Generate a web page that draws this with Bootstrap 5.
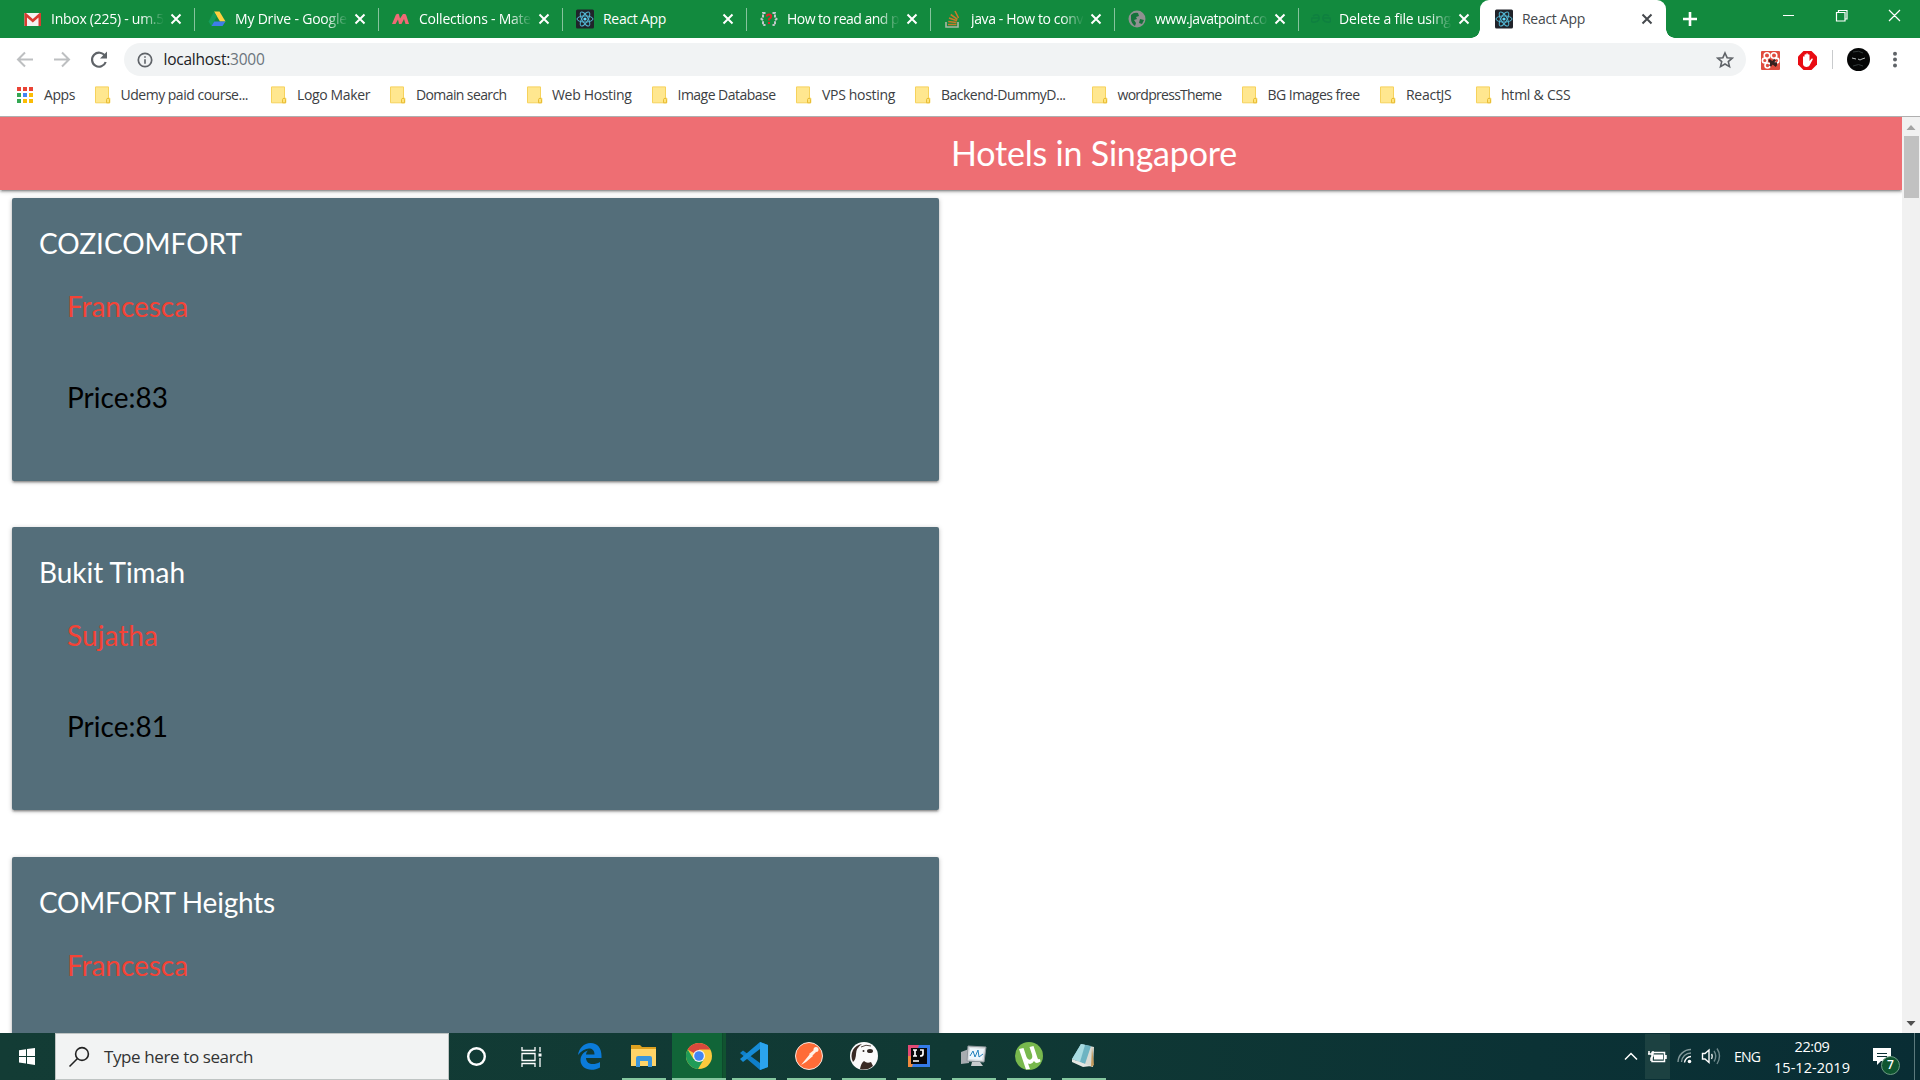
<!DOCTYPE html>
<html lang="en">
<head>
<meta charset="utf-8">
<title>React App</title>
<link href="https://cdn.jsdelivr.net/npm/bootstrap@5.3.0/dist/css/bootstrap.min.css" rel="stylesheet">
<style>
html,body{height:100%;overflow:hidden}
body{font-family:"Open Sans","Noto Sans",sans-serif;font-size:14px;line-height:1;background:#fff;color:#3c4043}
svg{display:block;flex:none}
.fit{white-space:nowrap;display:inline-block}
.screen{width:1920px;height:1080px}
.tabstrip{height:38px;background:#128a3e;padding-left:11px}
.tab{width:184px;height:38px;padding-left:12px;color:#fff}
.tab .fav{width:20px;height:20px;margin-right:8px}
.tab .ttl{width:113px;height:20px;line-height:19px;overflow:hidden;white-space:nowrap}
.tab.cut .ttl{-webkit-mask-image:linear-gradient(90deg,#000 80%,transparent 100%);mask-image:linear-gradient(90deg,#000 80%,transparent 100%)}
.tab .x{margin-left:6px}
.tab .sep{width:1px;height:23px;background:#86c39d;margin-left:auto}
.tab.on{color:#45494d;background:#fff;border-radius:9px 9px 0 0;width:186px;margin-left:-3px;padding-left:14px;position:relative}
.tab.on:before,.tab.on:after{content:"";position:absolute;bottom:0;width:9px;height:9px}
.tab.on:before{left:-9px;background:radial-gradient(circle at 0 0,transparent 8.5px,#fff 9px)}
.tab.on:after{right:-9px;background:radial-gradient(circle at 100% 0,transparent 8.5px,#fff 9px)}
.newtab{margin:12px 0 0 17px}
.winctl{margin-right:19px}
.toolbar{height:42px;padding:1px 0 0 15px}
.omni{width:1622px;height:33px;border-radius:17px;background:#f1f3f4;padding:0 12px 0 13px;margin-left:17px;font-size:15.5px;color:#202124}
.omni .fit{margin-left:10.5px}
.bookmarks{height:36px;padding-left:17px}
.bm{flex:none}
.viewport{height:917px;border-top:1px solid #afafaf}
.sheet{width:1902px;overflow:hidden}
.topnav{height:73px;background:#ee6e73;color:#fff;box-shadow:0 2px 2px 0 rgba(0,0,0,.2),0 3px 1px -2px rgba(0,0,0,.14),0 1px 5px 0 rgba(0,0,0,.22);font-family:Lato,sans-serif;font-size:34px;padding-left:951px;line-height:71px}
.hotels{padding:8px 0 0 12px}
.hotel{width:927px;height:283px;margin-bottom:46.3px;flex:none;background:#546e7a;border:0;border-radius:2px;box-shadow:0 2px 2px 0 rgba(0,0,0,.2),0 3px 1px -2px rgba(0,0,0,.14),0 1px 5px 0 rgba(0,0,0,.22);font-family:Lato,sans-serif;font-size:28px;line-height:36px;padding:27px}
.hotel .name{color:#fff}
.hotel .host{color:#f44336;padding-left:28px;margin-top:27px}
.hotel .price{color:#000;padding-left:28px;margin-top:55px}
.sbar{width:18px;background:#f1f1f1}
.thumb{width:15px;height:62px;background:#c1c1c1}
.taskbar{height:47px;background:linear-gradient(90deg,#133c35,#103934 50%,#0b3235 80%,#092d34);color:#fff}
.start{width:55px;padding-left:19px}
.searchbox{width:394px;background:#f2f3f3;border:1px solid #bfc4c3;color:#333;font-size:17px;padding-left:12px}
.searchbox .fit{margin-left:14px}
.slot{width:55px;height:47px}
.edge{margin-left:3px}
.app{width:55px;height:47px;padding-top:9px}
.app svg{margin-left:13px}
.app .run{width:44px;height:2px;margin-left:5px;background:#85c79f}
.app.act{background:linear-gradient(90deg,#116538 50px,#0d4a2c 50px,#0d4a2c 51px,#115330 51px,#115330 54px,transparent 54px)}
.app.act .run{width:54px;margin-left:0}
.batt{width:25px;height:45px;background:#1c4141;margin:1px 0 0 4px}
.lang{width:37px}
.clock{width:90px;font-size:14.5px;line-height:14px;padding-top:7px}
.clock .date{margin-top:7px}
.notif{width:57px;padding-left:16px}
.peek{width:1px;background:#5c7a7d;margin-right:5px}
.count{position:absolute;left:8px;top:8px;width:19px;height:19px;border-radius:50%;background:#0e5530;border:1px solid #6c9b81;font-size:12px;font-weight:600}
</style>
<script src="https://cdn.jsdelivr.net/npm/bootstrap@5.3.0/dist/js/bootstrap.bundle.min.js"></script>
</head>
<body>
<svg width="0" height="0" class="position-absolute">
<defs>
<symbol id="react" viewBox="0 0 20 20"><rect x="1" y="0.5" width="18" height="19" rx="1.5" fill="#20232a"/><g fill="none" stroke="#53b6d3" stroke-width="1"><ellipse cx="10" cy="10" rx="8" ry="3.1"/><ellipse cx="10" cy="10" rx="8" ry="3.1" transform="rotate(60 10 10)"/><ellipse cx="10" cy="10" rx="8" ry="3.1" transform="rotate(120 10 10)"/></g><circle cx="10" cy="10" r="1.6" fill="#61dafb"/></symbol>
<symbol id="close" viewBox="0 0 12 12"><path d="M1.500 1.500l9 9M10.500 1.500l-9 9" stroke="currentColor" stroke-width="2" fill="none"/></symbol>
<symbol id="note" viewBox="0 0 16 18"><path d="M.5.9h13v11.3h1.3v4.6H.5z" fill="#ffe78f" stroke="#f6d25c" stroke-width="1"/><path d="M11.5 16.8v-3.3c0-1.6 3-1.6 3 0v3.3z" fill="#ffe37a" stroke="#e9bd35"/></symbol>
</defs>
</svg>
<div class="screen d-flex flex-column">
<header>
<div class="tabstrip d-flex" id="tabs"></div>
<div class="toolbar d-flex align-items-center">
<svg width="92" height="20" viewBox="0 0 92 20" fill="none" stroke-width="2"><path d="M18 9.500H3.500M10 2.500L3 9.500L10 16.500M39 9.500H53.500M47 2.500L54 9.500L47 16.500" stroke="#bdbfc1"/><path d="M90 6A7 7 0 1 0 90.700 12" stroke="#5f6368" stroke-width="2.200"/><path d="M92 1.500V8.500H85z" fill="#5f6368"/></svg>
<div class="omni d-flex align-items-center">
<svg width="16" height="16" viewBox="0 0 16 16"><circle cx="8" cy="8" r="6.700" fill="none" stroke="#5f6368" stroke-width="1.700"/><path d="M8 7.200V11.800M8 4.200V5.800" stroke="#5f6368" stroke-width="1.600"/></svg>
<span class="fit" data-w="101">localhost:<span class="text-secondary">3000</span></span>
<svg class="ms-auto" width="18" height="18" viewBox="0 0 18 18"><path d="M9 2l2.100 4.700 5.100.5-3.900 3.400 1.200 5L9 13l-4.500 2.600 1.200-5-3.900-3.400 5.100-.5z" fill="none" stroke="#5f6368" stroke-width="1.600"/></svg>
</div>
<svg width="160" height="26" viewBox="1746 46 160 26"><rect x="1761" y="50" width="19" height="19" rx="1" fill="#e04c3e"/><g fill="none" stroke="#fff" stroke-width="1.600"><circle cx="1767" cy="54.500" r="2.800"/><circle cx="1774" cy="54.500" r="2.800"/><circle cx="1764.800" cy="59.500" r="2.400"/><circle cx="1776.500" cy="59.500" r="2.400"/><circle cx="1767.500" cy="64.500" r="2.500"/></g><path d="M1769 59l7.500 6M1775 58.500l-5 6.500M1770 62.500h7" stroke="#37201e" stroke-width="2.400"/><path d="M1803.500 50h8l5.500 5.500v8l-5.500 5.500h-8l-5.500-5.500v-8z" fill="#e90c13"/><path d="M1803 60v-4c0-1 1.500-1 1.500 0v-2c0-1 1.700-1 1.700 0v-1c0-1 1.700-1 1.700 0v1c0-1 1.600-1 1.600 0v6l1.800-2c1-1 1.900 0 1.200 1l-3 5.500c-1.500 2.500-6.500 1.500-6.500-1.500z" fill="#fff"/><path d="M1832.500 49v19" stroke="#c9cbcd"/><circle cx="1858.500" cy="58.500" r="11.500" fill="#050606"/><path d="M1852 57l4 1M1858 58q2 2 4 0l3-1" stroke="#b9bebe" fill="none"/><path d="M1853 51q6-2 10 1M1853 65q6-3 10 0" stroke="#333a3a" fill="none"/><g fill="#5f6368"><circle cx="1895" cy="52.700" r="2"/><circle cx="1895" cy="58.600" r="2"/><circle cx="1895" cy="64.500" r="2"/></g></svg>
</div>
<div class="bookmarks d-flex" id="bookmarks"></div>
</header>
<main class="viewport d-flex">
<div class="sheet">
<nav class="topnav"><span class="fit" data-w="286">Hotels in Singapore</span></nav>
<section class="hotels d-flex flex-column">
<article class="card hotel"><div class="name"><span class="fit" data-w="203">COZICOMFORT</span></div><div class="host"><span class="fit" data-w="121">Francesca</span></div><div class="price"><span class="fit" data-w="101">Price:83</span></div></article>
<article class="card hotel"><div class="name"><span class="fit" data-w="146">Bukit Timah</span></div><div class="host"><span class="fit" data-w="91">Sujatha</span></div><div class="price"><span class="fit" data-w="101">Price:81</span></div></article>
<article class="card hotel"><div class="name"><span class="fit" data-w="236">COMFORT Heights</span></div><div class="host"><span class="fit" data-w="121">Francesca</span></div></article>
</section>
</div>
<div class="sbar d-flex flex-column align-items-center">
<svg width="18" height="19" viewBox="0 0 18 19"><path d="M4.500 13L9 8l4.500 5z" fill="#a3a3a3"/></svg>
<div class="thumb"></div>
<svg class="mt-auto" width="18" height="19" viewBox="0 0 18 19"><path d="M4.500 7h9L9 12z" fill="#505050"/></svg>
</div>
</main>
<footer class="taskbar d-flex">
<div class="start d-flex align-items-center"><svg width="17" height="17" viewBox="0 0 17 17" fill="#fff"><path d="M0 2.300L7 1.300V8H0zM8 1.100L16 0V8H8zM0 9H7V15.600L0 14.600zM8 9H16V17L8 15.800z"/></svg></div>
<div class="searchbox d-flex align-items-center"><svg width="22" height="22" viewBox="0 0 22 22" fill="none" stroke="#222" stroke-width="1.600"><circle cx="14" cy="8" r="6.400"/><path d="M9.500 12.500L1.500 20.500"/></svg><span class="fit" data-w="149">Type here to search</span></div>
<div class="slot d-flex align-items-center justify-content-center"><svg width="22" height="22" viewBox="0 0 22 22"><circle cx="10.500" cy="10.500" r="8.300" fill="none" stroke="#fff" stroke-width="2.400"/></svg></div>
<div class="slot d-flex align-items-center justify-content-center"><svg width="22" height="20" viewBox="0 0 22 20" fill="none" stroke="#fff" stroke-width="1.300"><path d="M1 0V3.500H14V0M1 20V16.500H14V20M1 6.500H14V13.500H1zM19 0V5M19 11V20"/><path d="M17.500 6.500H20.500V9.500H17.500z" fill="#fff" stroke="none"/></svg></div>
<div class="slot edge d-flex align-items-center justify-content-center"><svg width="24" height="27" viewBox="0 0 24 27"><path d="M0 12C1 5 6 0 12.500 0C20 0 24 5.500 23.500 15H8C8.500 22 16 22.500 22 19V24.500C13 29.500 2 26 2.500 16.500C3 11 7 8.500 10 7.500C8.500 9 8.200 10 8 11.500H16.500C16.500 3 6 4 0 12z" fill="#0b7bd9"/></svg></div>
<div class="d-flex" id="apps"></div>
<div class="ms-auto d-flex">
<svg width="20" height="47" viewBox="0 0 20 47"><path d="M4 26.500L10 20.500L16 26.500" fill="none" stroke="#fff" stroke-width="1.500"/></svg>
<div class="batt d-flex align-items-center"><svg width="25" height="14" viewBox="0 0 25 14"><path d="M7 2.500H19.500V11.500H7zM21 5v4" fill="none" stroke="#fff" stroke-width="1.500"/><path d="M9 4.500H18V9.500H9z" fill="#fff"/><path d="M4 1V4M8 1V4M3 4H8V6L6 8V11" fill="none" stroke="#fff" stroke-width="1.500"/></svg></div>
<svg width="60" height="47" viewBox="1671 0 60 47" fill="none" stroke-width="1.400"><path d="M1679 29A13 13 0 0 1 1692 16.500M1682.500 29A9.500 9.500 0 0 1 1692 20" stroke="#83999b"/><path d="M1685.500 29.500A7 7 0 0 1 1692 23.500" stroke="#fff"/><circle cx="1690.500" cy="28.500" r="1.800" fill="#fff"/><path d="M1703.500 20.500H1706L1710 17V29.500L1706 26H1703.500z" stroke="#fff"/><path d="M1712.500 21Q1714 23 1712.500 26" stroke="#dce3e3"/><path d="M1715 18Q1718.500 23 1715 28.500M1718 15.500Q1723 23 1718 31" stroke="#6f898c"/></svg>
<div class="lang d-flex align-items-center"><span class="fit ms-1" data-w="26">ENG</span></div>
<div class="clock d-flex flex-column align-items-center"><span class="fit" data-w="35">22:09</span><span class="fit date" data-w="76">15-12-2019</span></div>
<div class="notif d-flex align-items-center"><div class="position-relative"><svg width="18" height="18" viewBox="0 0 18 18"><path d="M0 0H18V13H8L4 17V13H0z" fill="#fff"/><path d="M4 5.500H14M4 8.500H14" stroke="#0a3035"/></svg><span class="count d-flex align-items-center justify-content-center">7</span></div></div>
<div class="peek"></div>
</div>
</footer>
</div>
<script>
const use = (id, w, h) => `<svg width="${w}" height="${h}"><use href="#${id}"/></svg>`;
const fav = inner => `<svg width="20" height="20" viewBox="0 0 20 20">${inner}</svg>`;
const react = use('react', 20, 20);
const tabs = [
 ['Inbox (225) - um.5', 113, fav('<path d="M1.500 4h16.500v13H1.500z" fill="#f4f2f0"/><path d="M1.500 17V4h1.500l6.800 6L16.500 4H18v13h-2.500V8.500L9.800 13.500 4 8.500V17z" fill="#d93c30"/>')],
 ['My Drive - Google', 112, fav('<path d="M7 2.500h5.500L18.500 12.500H13z" fill="#ffcf3f"/><path d="M7 2.500L9.800 7.500 4.500 17 1.500 12.700z" fill="#159c5a"/><path d="M7.200 12.500H18.500L15.500 17H4.500z" fill="#3f7de9"/>')],
 ['Collections - Mate', 112, fav('<path d="M1 15L5 5.500q2.500-1.500 3 0l1 4 3-4.500h2q1 0 1.500 2l2.500 8h-3.500l-1.500-5-2.500 5H8L7 10.500 4.500 15z" fill="#f06a76"/>')],
 ['React App', 63, react],
 ['How to read and p', 112, fav('<g fill="none" stroke="#c3c7c9" stroke-width="2" stroke-dasharray="3 1"><path d="M6.500 4H4v4.500L2.500 10 4 11.500V16h2.500M13.500 4H16v4.500L17.500 10 16 11.500V16h-2.500"/></g><path d="M7.800 7.500q0-2 2.200-2t2.200 2q0 1.500-2.200 2.500v1.500M10 13v2" stroke="#e3232b" stroke-width="1.900" fill="none"/>')],
 ['java - How to conv', 112, fav('<path d="M3 13v5h12v-5" fill="none" stroke="#a9b8a5" stroke-width="1.600"/><path d="M5 15.500h8.500M5.200 12.500l8.300 1M6 9l8 2.700M7.700 5.500l6.800 4.800M12 2l3.500 7" stroke="#c8792a" stroke-width="1.600"/>')],
 ['www.javatpoint.co', 112, fav('<circle cx="10" cy="10" r="8.500" fill="#8f9191"/><path d="M4 6q3-3 7-2l1 3-3 1 1 2-3 1 2 3-1 3q-4-3-4-7M13 10l4 1-2 4-3-1z" fill="#14723a"/>')],
 ['Delete a file using', 112, fav('<path d="M2 7q5-3 6 1t-4 5-3-4h7M18 7q-5-3-6 1t4 5 3-4h-7" fill="none" stroke="#0f8040" stroke-width="1.500"/>')],
 ['React App', 63, react]
];
document.getElementById('tabs').innerHTML = tabs.map(([t, w, icon], i) =>
 `<div class="tab d-flex align-items-center ${w > 100 ? 'cut' : ''} ${i === 8 ? 'on' : ''}"><span class="fav">${icon}</span><div class="ttl"><span class="fit" data-w="${w}">${t}</span></div><span class="x">${use('close', 12, 12)}</span>${i < 7 ? '<span class="sep"></span>' : ''}</div>`).join('')
 + '<svg class="newtab" width="14" height="14" viewBox="0 0 14 14"><path d="M7 0v14M0 7h14" stroke="#fff" stroke-width="2.600"/></svg>'
 + '<svg class="winctl ms-auto" width="120" height="32" viewBox="1781 0 120 32" fill="none" stroke="#fff" stroke-width="1.200"><path d="M1783 15.500h11M1836.500 12.500h8.500v8.500h-8.500zM1838.500 12.500v-2h8.500v8.500h-2M1889 10l11 11M1900 10l-11 11"/></svg>';

// label, start of the icon, start and width of the label
const marks = [['Apps',17,44,31],['Udemy paid course...',95,120.5,127.5],['Logo Maker',271,297,73],['Domain search',390,416,90.5],['Web Hosting',527,552,79.500],['Image Database',652,677.5,98],['VPS hosting',796,822,73],['Backend-DummyD...',915,941,124.500],['wordpressTheme',1092,1117.5,104],['BG Images free',1242,1267.5,92],['ReactJS',1380,1406,45.5],['html & CSS',1476,1501,69.5]];
const colours = ['#ea4335','#ea4335','#ea4335','#34a853','#4285f4','#fbbc05','#34a853','#fbbc05','#fbbc05'];
const grid = '<svg width="16" height="18" viewBox="0 0 16 18">' + colours.map((c, i) => `<rect x="${i % 3 * 6}" y="${1 + Math.floor(i / 3) * 6}" width="4" height="4" fill="${c}"/>`).join('') + '</svg>';
document.getElementById('bookmarks').innerHTML = marks.map(([t, x, tx, w], i) => {
 const next = marks[i + 1] ? marks[i + 1][1] : 1600;
 return `<div class="bm d-flex pt-1" style="width:${next - x}px"><div style="width:${tx - x}px;padding-top:2px">${i ? use('note', 16, 18) : grid}</div><span class="fit pt-1" data-w="${w}">${t.replace('&', '&amp;')}</span></div>`;
}).join('');

const apps = [
 '<path d="M1 3h9l2 2h14v19H1z" fill="#dea11f"/><path d="M1 7h25v17H1z" fill="#ffd467"/><path d="M6 25V16q0-2 2-2h12q2 0 2 2v9h-4v-6h-8v6z" fill="#3a96dd"/>',
 '<circle cx="14" cy="14" r="13" fill="#fbc93d"/><path d="M14 14L2.700 7.500A13 13 0 0 1 25.300 7.500H14z" fill="#d9493c"/><path d="M2.700 7.500A13 13 0 0 0 13 27L19 17 14 14 8.500 17z" fill="#209c57"/><circle cx="14" cy="14" r="6" fill="#f4f4f4"/><circle cx="14" cy="14" r="4.800" fill="#4285f4"/>',
 '<path d="M20 0L28 3V25L20 28 0 11 3 8.500 20 21z" fill="#0f7fc9"/><path d="M20 0V7L3 20 0 17z" fill="#168cd6"/><path d="M20 0L28 3V25L20 28z" fill="#2ba4ee"/>',
 '<circle cx="14" cy="14" r="13.500" fill="#ff6c37" stroke="#f6e7df"/><path d="M6 23L15 12l3 2-7 6zM14 12l5-4 2 2-4 4z" fill="#fff1e7"/><circle cx="21" cy="7.500" r="2.500" fill="#fff1e7"/>',
 '<circle cx="14" cy="14" r="14" fill="#fafafa"/><path d="M3 8q3-5 9-6-6 4-6 10 0 5-3 8-3-6 0-12zM10 27q1-6 4-8 3 3 7 1l2 4q-6 5-13 3z" fill="#382923"/><ellipse cx="20" cy="9" rx="3" ry="2" fill="#302824"/><path d="M11 5q5-3 10-1" stroke="#554944" fill="none"/><circle cx="13.500" cy="9" r="1" fill="#302824"/>',
 '<path d="M3 3h11v22H3z" fill="#e34a75"/><path d="M3 14h11v11H3z" fill="#f18a3d"/><path d="M14 3h11v22H7z" fill="#347be7"/><path d="M6 6h16v16H6z" fill="#080808"/><path d="M8 8h4M10 8v6M8 14h4M15 8h3v4q0 2-3 2M8 19h6" stroke="#fff" stroke-width="1.700" fill="none"/>',
 '<path d="M1 10l8-3v14l-8 1z" fill="#a7acb0"/><path d="M8 4l18 1-2 15-17-1z" fill="#d9dde0" stroke="#8e969c"/><path d="M10 6l14 1-2 11-13-1z" fill="#eef7fc"/><path d="M10 14l3-5 2 6 3-7 1 7 4-3" stroke="#2382bd" fill="none"/><path d="M12 20h8l3 4H11z" fill="#c8cbcd"/>',
 '<circle cx="14" cy="14" r="14" fill="#78b84d"/><path d="M4 7l4.500-1 3 9q1.500 3.500 4 2.500t1.500-5L14.500 5l4-1 4 12q.5 2 2.500 1l.5 2.500q-4.500 3-6.500-.5-2 4-6 2.500l2 5.500-4 .5z" fill="#fff"/>',
 '<path d="M11 2l13 3-1 20-16-4z" fill="#d8dbd4"/><path d="M22 5l2 18-3 2z" fill="#c29a5c"/><path d="M11 2l10 2-6 18-13-5z" fill="#6db4c2"/><path d="M11 2l4 1-5 17-8-3z" fill="#a8dce2"/><path d="M2 17l13 5 6 2-8 1-11-5z" fill="#e5e7e2"/>'
];
document.getElementById('apps').innerHTML = apps.map((a, i) =>
 `<div class="app d-flex flex-column ${i === 1 ? 'act' : ''}"><svg width="28" height="28" viewBox="0 0 28 28">${a}</svg><div class="run mt-auto"></div></div>`).join('');

// Tracks each label to its intended measure.
document.querySelectorAll('.fit').forEach(e => {
 const w = e.getBoundingClientRect().width;
 e.style.letterSpacing = (e.dataset.w - w) / e.textContent.length + 'px';
});
</script>
</body>
</html>
